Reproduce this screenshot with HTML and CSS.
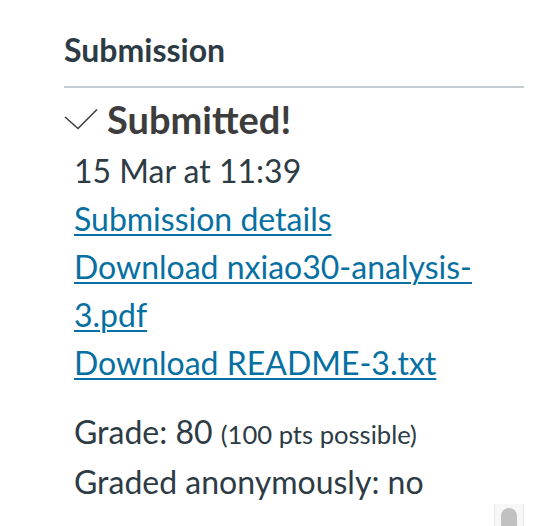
FILE: index.html
```html
<!DOCTYPE html>
<html lang="en">
<head>
<meta charset="utf-8">
<title>Submission</title>
<link rel="stylesheet" href="styles.css">
</head>
<body>
<aside class="sidebar">
  <h2 class="sidebar-title">Submission</h2>
  <div class="status">
    <svg class="status-icon" width="34" height="22" viewBox="0 0 34 22" aria-hidden="true">
      <polyline points="1,9 14,20.5 33,1.5" fill="none" stroke="#3f3f3f" stroke-width="1.6" stroke-linejoin="miter"/>
    </svg>
    <span class="status-text">Submitted!</span>
  </div>
  <div class="details">
    <div class="date">15 Mar at 11:39</div>
    <div><a href="#" class="link">Submission details</a></div>
    <div><a href="#" class="link">Download nxiao30-analysis-3.pdf</a></div>
    <div><a href="#" class="link">Download README-3.txt</a></div>
    <div class="grade">
      <div>Grade: 80 <span class="possible">(100 pts possible)</span></div>
      <div>Graded anonymously: no</div>
    </div>
  </div>
</aside>
<div class="scrollbar"><div class="scrollbar-thumb"></div></div>
</body>
</html>
```
FILE: styles.css
```css
html, body {
  margin: 0;
  padding: 0;
  background: #ffffff;
}
body {
  font-family: Lato, "Liberation Sans", sans-serif;
  color: #2d3b45;
  overflow: hidden;
  height: 526px;
  position: relative;
}
.sidebar {
  width: 460px;
  margin-left: 64px;
}
.sidebar-title {
  margin: 0;
  padding-top: 30px;
  padding-bottom: 16px;
  font-size: 32px;
  line-height: 40px;
  font-weight: 700;
  color: #2d3b45;
  border-bottom: 2px solid #c7cdd1;
}
.status {
  display: flex;
  align-items: center;
  margin-top: 7px;
  height: 48px;
}
.status-icon {
  flex: none;
  margin-right: 9px;
  margin-top: 0;
}
.status-text {
  font-size: 38px;
  line-height: 48px;
  font-weight: 700;
  color: #3d3d3d;
}
.details {
  margin-top: 4px;
  padding-left: 10px;
  font-size: 32px;
  line-height: 48px;
}
.link {
  color: #0770a3;
  text-decoration: underline;
  text-decoration-thickness: 2px;
  text-underline-offset: 3px;
}
.grade {
  margin-top: 21px;
}
.possible {
  font-size: 25.6px;
}
.scrollbar {
  position: absolute;
  left: 494px;
  top: 504px;
  width: 28px;
  height: 40px;
  background: #f7f7f7;
  border-left: 1px solid #e6e6e6;
  border-right: 1px solid #e6e6e6;
}
.scrollbar-thumb {
  margin: 4px auto 0;
  width: 16px;
  height: 40px;
  background: #c1c1c1;
  border-radius: 8px 8px 0 0;
}
```
